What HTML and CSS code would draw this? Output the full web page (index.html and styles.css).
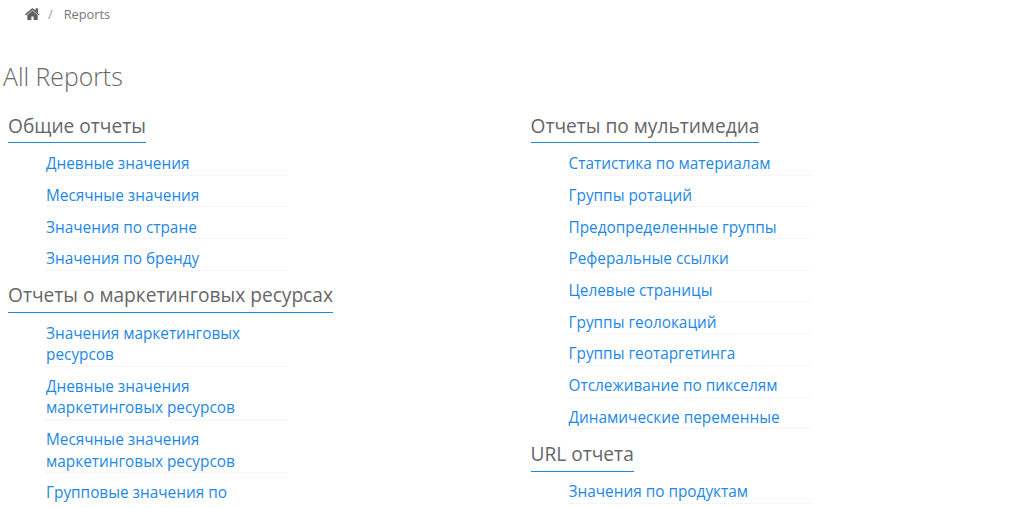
FILE: index.html
```html
<!DOCTYPE html>
<html lang="ru">
<head>
<meta charset="utf-8">
<title>Reports</title>
<link rel="stylesheet" href="styles.css">
</head>
<body>
<nav class="crumbs">
  <svg class="home" viewBox="0 0 1664 1408" width="15" height="13" aria-hidden="true"><path d="M1408 768v480q0 26-19 45t-45 19H960V928H704v384H320q-26 0-45-19t-19-45V768q0-1 .5-3t.5-3l575-474 575 474q1 2 1 6zm223-69-62 74q-8 9-21 11h-3q-13 0-21-7L832 200 140 777q-12 8-24 7-13-2-21-11l-62-74q-8-10-7-23.500t11-21.500L756 27q32-27 76-27t76 27l272 228V32q0-14 9-23t23-9h192q14 0 23 9t9 23v544l219 182q10 8 11 21.500t-7 23.500z"/></svg>
  <span class="sep">/</span>
  <span class="here">Reports</span>
</nav>
<h1 class="title">All Reports</h1>
<div class="cols">
  <div class="col">
    <section>
      <h2 class="head">Общие отчеты</h2>
      <ul class="links">
        <li><a href="#">Дневные значения</a></li>
        <li><a href="#">Месячные значения</a></li>
        <li><a href="#">Значения по стране</a></li>
        <li><a href="#">Значения по бренду</a></li>
      </ul>
    </section>
    <section>
      <h2 class="head">Отчеты о маркетинговых ресурсах</h2>
      <ul class="links">
        <li><a href="#">Значения маркетинговых ресурсов</a></li>
        <li><a href="#">Дневные значения маркетинговых ресурсов</a></li>
        <li><a href="#">Месячные значения маркетинговых ресурсов</a></li>
        <li><a href="#">Групповые значения по маркетинговым ресурсам</a></li>
      </ul>
    </section>
  </div>
  <div class="col">
    <section>
      <h2 class="head">Отчеты по мультимедиа</h2>
      <ul class="links">
        <li><a href="#">Статистика по материалам</a></li>
        <li><a href="#">Группы ротаций</a></li>
        <li><a href="#">Предопределенные группы</a></li>
        <li><a href="#">Реферальные ссылки</a></li>
        <li><a href="#">Целевые страницы</a></li>
        <li><a href="#">Группы геолокаций</a></li>
        <li><a href="#">Группы геотаргетинга</a></li>
        <li><a href="#">Отслеживание по пикселям</a></li>
        <li><a href="#">Динамические переменные</a></li>
      </ul>
    </section>
    <section>
      <h2 class="head">URL отчета</h2>
      <ul class="links">
        <li><a href="#">Значения по продуктам</a></li>
      </ul>
    </section>
  </div>
</div>
</body>
</html>
```
FILE: styles.css
```css
html, body {
  height: 508px;
  overflow: hidden;
}
body {
  margin: 0;
  background: #fff;
  font-family: "Open Sans", sans-serif;
  color: #666;
}
.crumbs {
  display: flex;
  align-items: center;
  height: 28px;
  padding-left: 25px;
  font-size: 12.8px;
  color: #777;
}
.home {
  fill: #5f5f5f;
}
.sep {
  margin-left: 8px;
  color: #999;
}
.here {
  margin-left: 11px;
}
.title {
  margin: 29px 0 0 3px;
  font-size: 24.8px;
  font-weight: 300;
  line-height: 38px;
  color: #666;
}
.cols {
  display: grid;
  grid-template-columns: 522.5px 1fr;
  padding-left: 8px;
  margin-top: 17.7px;
}
.head {
  display: table;
  margin: 0;
  font-size: 19.15px;
  font-weight: 400;
  line-height: 27px;
  padding-bottom: 2.8px;
  border-bottom: 1px solid #1e88e5;
  color: #666;
}
.links {
  list-style: none;
  margin: 0 0 11.8px;
  padding: 9.7px 0 0 38px;
  width: 242px;
}
.links li {
  margin-bottom: 9.3px;
  border-bottom: 1px dotted #eee;
  font-size: 15.36px;
  line-height: 21.4px;
}
.links a {
  color: #1e88e5;
  text-decoration: none;
}
```
